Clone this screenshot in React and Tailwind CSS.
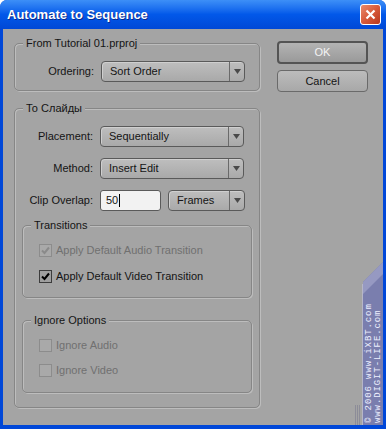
import React from "react";

const font = { fontFamily: '"Liberation Sans", Arial, sans-serif' };

function Arrow() {
  return (
    <svg width="7" height="5" viewBox="0 0 7 5">
      <polygon points="0,0 7,0 3.5,5" fill="#4a4a4a" />
    </svg>
  );
}

function Dropdown({ value, width }) {
  return (
    <div
      className="flex h-[21px] items-stretch rounded-[4px] border border-[#5a5a5a] bg-gradient-to-b from-[#bebebe] to-[#a9a9a9] shadow-[inset_1px_1px_0_#cfcfcf]"
      style={{ width }}
    >
      <div className="flex flex-1 items-center pl-[8px] text-[11px] text-[#141414]">{value}</div>
      <div className="flex w-[15px] items-center justify-center border-l border-[#6a6a6a]">
        <Arrow />
      </div>
    </div>
  );
}

function Group({ label, className, children }) {
  return (
    <div className={"relative rounded-[5px] border border-[#868686] shadow-[inset_1px_1px_0_#bdbdbd,1px_1px_0_#bdbdbd] " + className}>
      <span className="absolute -top-[8px] left-[8px] bg-[#a4a4a4] px-[3px] text-[11px] leading-[14px] text-[#141414]">
        {label}
      </span>
      {children}
    </div>
  );
}

function Check({ checked, disabled, label }) {
  return (
    <div className="flex h-[13px] items-center gap-[4px]">
      <div
        className={
          "flex h-[13px] w-[13px] items-center justify-center border " +
          (disabled ? "border-[#8c8c8c] bg-[#a9a9a9]" : "border-[#3c3c3c] bg-[#9f9f9f]")
        }
      >
        {checked && (
          <svg width="9" height="9" viewBox="0 0 9 9">
            <path d="M1 4.5 L3.5 7 L8 1.5" stroke={disabled ? "#8a8a8a" : "#000"} strokeWidth="2" fill="none" />
          </svg>
        )}
      </div>
      <span className={"text-[11px] " + (disabled ? "text-[#707070]" : "text-[#141414]")}>{label}</span>
    </div>
  );
}

function Row({ label, children, lw = 78 }) {
  return (
    <div className="flex items-center">
      <div className="text-right text-[11px] text-[#141414]" style={{ width: lw }}>{label}</div>
      <div className="ml-[7px] flex items-center gap-[7px]">{children}</div>
    </div>
  );
}

export default function App() {
  return (
    <div
      className="relative flex h-[429px] w-[386px] flex-col overflow-hidden rounded-t-[7px] bg-[#0047d8]"
      style={font}
    >
      {/* title bar */}
      <div className="flex h-[29px] shrink-0 items-center justify-between bg-gradient-to-b from-[#3d8ff7] via-[#0258e9] to-[#0048d6] pl-[7px] pr-[5px]">
        <span className="text-[13px] font-bold text-white [text-shadow:1px_1px_0_#0c2a8a]">
          Automate to Sequence
        </span>
        <div className="flex h-[21px] w-[21px] items-center justify-center rounded-[3px] border border-white bg-gradient-to-br from-[#e88a6c] via-[#d75a3a] to-[#b8361c]">
          <svg width="11" height="11" viewBox="0 0 11 11">
            <path d="M1.5 1.5 L9.5 9.5 M9.5 1.5 L1.5 9.5" stroke="white" strokeWidth="2.2" />
          </svg>
        </div>
      </div>

      {/* body */}
      <div className="mx-[3px] mb-[4px] flex flex-1 bg-[#a4a4a4] pl-[11px] pt-[14px]">
        <div className="flex w-[246px] flex-col">
          <Group label="From Tutorial 01.prproj" className="h-[48px] pt-[17px]">
            <Row label="Ordering:" lw={79}>
              <Dropdown value="Sort Order" width={144} />
            </Row>
          </Group>

          <Group label="То Слайды" className="mt-[17px] h-[300px] pt-[17px]">
            <div className="flex flex-col gap-[11px]">
              <Row label="Placement:">
                <Dropdown value="Sequentially" width={144} />
              </Row>
              <Row label="Method:">
                <Dropdown value="Insert Edit" width={144} />
              </Row>
              <Row label="Clip Overlap:">
                <div className="flex h-[21px] w-[61px] items-center rounded-[3px] border border-[#5a5a5a] bg-[#f2f2f2] pl-[5px] text-[11px] text-[#141414]">
                  50<span className="ml-[1px] inline-block h-[13px] w-[1px] bg-black" />
                </div>
                <Dropdown value="Frames" width={77} />
              </Row>
            </div>

            <Group label="Transitions" className="mx-[7px] mt-[14px] h-[73px] pl-[16px] pt-[18px]">
              <div className="flex flex-col gap-[13px]">
                <Check checked disabled label="Apply Default Audio Transition" />
                <Check checked label="Apply Default Video Transition" />
              </div>
            </Group>

            <Group label="Ignore Options" className="mx-[7px] mt-[22px] h-[73px] pl-[16px] pt-[18px]">
              <div className="flex flex-col gap-[12px]">
                <Check disabled label="Ignore Audio" />
                <Check disabled label="Ignore Video" />
              </div>
            </Group>
          </Group>
        </div>

        <div className="ml-[17px] flex flex-col gap-[6px]">
          <div className="-mt-[2px] flex h-[23px] w-[91px] items-center justify-center rounded-[4px] border-2 border-[#545454] bg-gradient-to-b from-[#b3b3b3] to-[#9a9a9a] text-[11px] text-[#f4f4f4]">
            OK
          </div>
          <div className="flex h-[22px] w-[91px] items-center justify-center rounded-[4px] border border-[#6a6a6a] bg-gradient-to-b from-[#bcbcbc] to-[#a8a8a8] text-[11px] text-[#141414]">
            Cancel
          </div>
        </div>
      </div>

      {/* watermark */}
      <svg className="absolute left-[352px] top-[262px]" width="31" height="163" viewBox="0 0 31 163">
        <polygon points="11,20 31,0 31,163 11,163" fill="#7a7eae" />
        <polygon points="11,20 31,0 31,12 11,32" fill="#9699c2" />
        <line x1="10.5" y1="22" x2="10.5" y2="163" stroke="#b6b6c8" strokeWidth="1" />
        <line x1="3.5" y1="143" x2="3.5" y2="163" stroke="#8c8c98" />
        <line x1="5.5" y1="143" x2="5.5" y2="163" stroke="#8c8c98" />
        <line x1="7.5" y1="143" x2="7.5" y2="163" stroke="#8c8c98" />
      </svg>
      <div
        className="absolute left-[365px] top-[423px] origin-top-left -rotate-90 whitespace-nowrap text-[9px] leading-[9px] tracking-[0.9px] text-[#eef0ff]"
        style={{ fontFamily: '"Liberation Mono", monospace' }}
      >
        <div>© 2006 www.iXBT.com</div>
        <div>www.DIGIT-LIFE.com</div>
      </div>
    </div>
  );
}
